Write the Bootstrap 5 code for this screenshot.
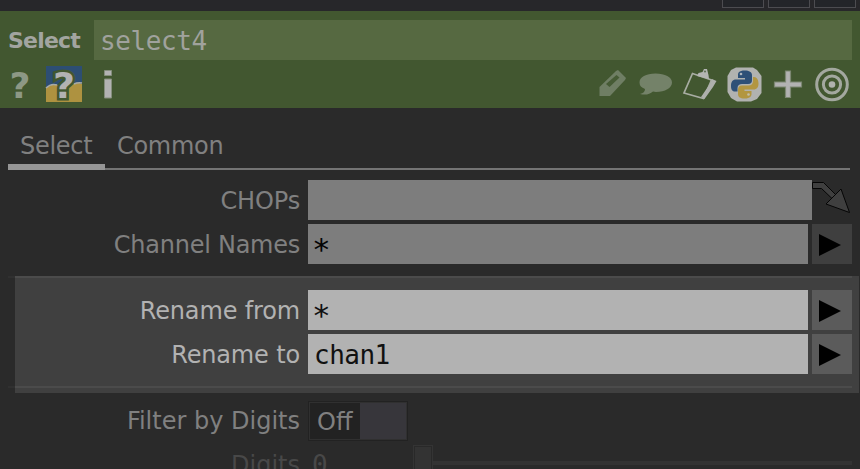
<!DOCTYPE html>
<html lang="en">
<head>
<meta charset="utf-8">
<meta name="viewport" content="width=device-width, initial-scale=1">
<title>Select parameters</title>
<link href="https://cdn.jsdelivr.net/npm/bootstrap@5.3.0/dist/css/bootstrap.min.css" rel="stylesheet">
<style>
body{background:#2a2a2a;font-family:"DejaVu Sans",sans-serif;font-size:24px;line-height:40px;color:#808080;height:469px;width:860px}
.mono{font-family:"DejaVu Sans Mono",monospace;font-size:26px;letter-spacing:-.5px;white-space:pre}
.titlebar{height:11px;background:#27272a;padding-right:4px;gap:4px}
.winbtn{width:42px;height:8px;border:1px solid #4c4c50;border-top:0;background:#232529}
.head{background:#425730;height:97px;padding:9px 8px 0}
.optype{font-weight:700;font-size:22px;width:86px;height:40px;color:#a2a5a0;letter-spacing:-.8px;line-height:42px}
.opname{background:#566941;height:40px;padding-left:6px;color:#a0a29d;line-height:42px;letter-spacing:-.4px}
.tools{height:48px}
.tools svg,.pick svg,.pbtn svg{display:block}
.tabs{height:62px;padding:0 10px 0 8px}
.tabline{border-bottom:2px solid #747474}
.ptab{height:62px;padding:18px 12px 0;letter-spacing:-.3px;white-space:nowrap;line-height:40px}
.ptab.current{width:97px;border-bottom:6px solid #969696}
.params{padding-top:10px}
.prow{height:40px;margin-bottom:4px;padding-right:8px}
.plabel{width:300px;text-align:right;margin-right:8px;letter-spacing:-.15px;line-height:42px;white-space:nowrap}
.plabel.tight{letter-spacing:-.25px}
.plabel.loose{letter-spacing:0;line-height:41px}
.pfield{height:40px;background:#7d7d7d;color:#050505;padding-left:6px;line-height:42px}
.star{padding-left:4px;line-height:50px;font-size:31px}
.pbtn{width:40px;height:40px;background:#3f3f3f;margin-left:4px}
.pick{width:40px;height:40px}
.lit{margin:12px 1px 0 15px;background:#404040;color:#b2b2b2;height:117px}
.lit .plabel{width:285px}
.lit .prow{padding-right:7px}
.lit .pfield{background:#b2b2b2;color:#111}
.lit .pbtn{background:#5b5b5b}
.rule{height:2px;background:linear-gradient(90deg,#303030 7px,#4b4b4b 7px);margin:0 7px 12px -7px}
.rule.closing{margin-top:12px}
.toggle{width:100px;height:40px;border:1px solid #222;padding:1px;background:#303030}
.toggle .off{width:50px;background:#222;line-height:38px;padding-left:7px}
.toggle .knob{background:#37363b}
.dim{color:#484848}
.handle{width:20px;height:26px;border:1px solid #343434;border-bottom:0;padding:1px;background:#292929;margin-top:3px}
.handle div{background:#333;height:25px}
.track{height:4px;background:#333;margin-top:17px}
.slider{width:439px}
.lastrow{height:24px;margin-bottom:0}
</style>
<script src="https://cdn.jsdelivr.net/npm/bootstrap@5.3.0/dist/js/bootstrap.bundle.min.js"></script>
</head>
<body class="overflow-hidden">
<div class="titlebar d-flex justify-content-end"><div class="winbtn"></div><div class="winbtn"></div><div class="winbtn"></div></div>
<header class="head">
  <div class="d-flex"><div class="optype">Select</div><div class="opname mono flex-grow-1">select4</div></div>
  <div class="tools d-flex justify-content-between">
    <svg width="120" height="48" viewBox="8 60 120 48" font-family="DejaVu Sans" font-weight="700">
      <text x="9.500" y="98" font-size="36" fill="#8d9885" textLength="21" lengthAdjust="spacingAndGlyphs">?</text>
      <rect x="46" y="66" width="36" height="36" fill="#2d4e73"/>
      <path d="M46 88Q51 83 59 85Q65 88 70 85Q76 81 82 84V102H46Z" fill="#ae9240"/>
      <path d="M46 88Q51 83 57 85M74 84Q78 82 82 83" stroke="#a7aaa5" stroke-width="1.5" fill="none"/>
      <text x="53" y="98" font-size="36" fill="#b2b2b2" stroke="#425730" stroke-width="5" paint-order="stroke" textLength="22" lengthAdjust="spacingAndGlyphs">?</text>
      <path d="M104.500 70.500h7v5h-7zM104.500 79h7v19h-7z" fill="#b2b2b2" stroke="#858e7d" stroke-width="1"/>
    </svg>
    <svg width="264" height="48" viewBox="588 60 264 48">
      <path d="M599.500 87L616 71L618 70L626 78L625 80L610 96H599.500Z" fill="#6f7e64"/>
      <path d="M606 84L616.500 75L619.500 77.500L609.500 87Z" fill="#465b35"/>
      <path d="M655.500 73.500C665 73.500 672 77 672 82.500S665 92 656 92L653 91.500Q648 96 640 94Q645 93 645 89Q639.500 87 639.500 82.500C639.500 77 646 73.500 655.500 73.500Z" fill="#748269"/>
      <path d="M692.500 73.500L711.500 80L703.500 98.500L684 93Z" fill="none" stroke="#a8ada3" stroke-width="1.700"/>
      <path d="M697 76L698.500 73L702.500 72L704 69H707L708.500 75L709 79Z" fill="#b4b5b3"/>
      <circle cx="705" cy="71.500" r="1.100" fill="#63735a"/>
      <path d="M712 79L716.500 81L713 87L704.500 99L701 97L710.500 83Z" fill="#aeb0ac"/>
      <path d="M736 67.500H753L757 70L761.500 76V93L757 99L751 101.500H737L731 98L727.500 92V76L731 70Z" fill="#b1b2b0"/>
      <path d="M745 70.500C738.500 70.500 738 73 738 75V78H745V79.500H736C732.500 79.500 731 82 731 86S732.500 91.500 735 91.500H737.500V88C737.500 85.500 739.500 84 742 84H748C751 84 752 82.500 752 80V75C752 72 749 70.500 745 70.500Z" fill="#2e5077"/>
      <path d="M744.500 98.500C750.500 98.500 751.500 96 751.500 94V91H744.500V89.500H753.500C757 89.500 758.500 87 758.500 83.500S757 77 754 77H753V81C753 84 751 85.500 748.500 85.500H742C739 85.500 738 87 738 90V94C738 97 740 98.500 744.500 98.500Z" fill="#b29641"/>
      <circle cx="741" cy="74" r="1.300" fill="#adb4bb"/><circle cx="748.500" cy="94.500" r="1.300" fill="#c4bea8"/>
      <path d="M785.500 71h5v11h11v5h-11v10.500h-5V87h-11v-5h11z" fill="#b2b2b2" stroke="#7d8873" stroke-width="1.200"/>
      <g fill="none" stroke="#a3a89f" stroke-width="3"><circle cx="832" cy="84.500" r="15.300"/><circle cx="832" cy="84.500" r="8.600"/></g><circle cx="832" cy="84.500" r="3.300" fill="#b0b2ae"/>
    </svg>
  </div>
</header>
<nav class="tabs d-flex"><div class="ptab current">Select</div><div class="ptab tabline flex-grow-1">Common</div></nav>
<main class="params">
  <div class="prow d-flex"><div class="plabel">CHOPs</div><div class="pfield flex-grow-1"></div>
    <div class="pick"><svg width="40" height="40" viewBox="0 0 40 40" fill="#3f3f3f" stroke="#050505"><path d="M.5 2.500H11.500L24 15L20.500 19L9.500 8.500H.5Z"/><path d="M29 9L37.500 32.500L14 24Z"/></svg></div></div>
  <div class="prow d-flex"><div class="plabel tight">Channel Names</div><div class="pfield mono star flex-grow-1">*</div><div class="pbtn"><svg width="40" height="40"><path d="M7 10L29 21L7 32Z"/></svg></div></div>
  <section class="lit">
    <div class="rule"></div>
    <div class="prow d-flex"><div class="plabel">Rename from</div><div class="pfield mono star flex-grow-1">*</div><div class="pbtn"><svg width="40" height="40"><path d="M7 10L29 21L7 32Z"/></svg></div></div>
    <div class="prow d-flex"><div class="plabel">Rename to</div><div class="pfield mono flex-grow-1">chan1</div><div class="pbtn"><svg width="40" height="40"><path d="M7 10L29 21L7 32Z"/></svg></div></div>
    <div class="rule closing"></div>
  </section>
  <div class="prow d-flex mt-2 mb-0"><div class="plabel loose">Filter by Digits</div><div class="toggle d-flex"><div class="off">Off</div><div class="knob flex-grow-1"></div></div></div>
  <div class="prow lastrow d-flex dim pt-1"><div class="plabel loose">Digits</div><div class="mono flex-grow-1 ps-1">0</div><div class="slider d-flex align-items-start"><div class="handle mt-0"><div></div></div><div class="track flex-grow-1 mt-3"></div></div></div>
</main>
</body>
</html>
